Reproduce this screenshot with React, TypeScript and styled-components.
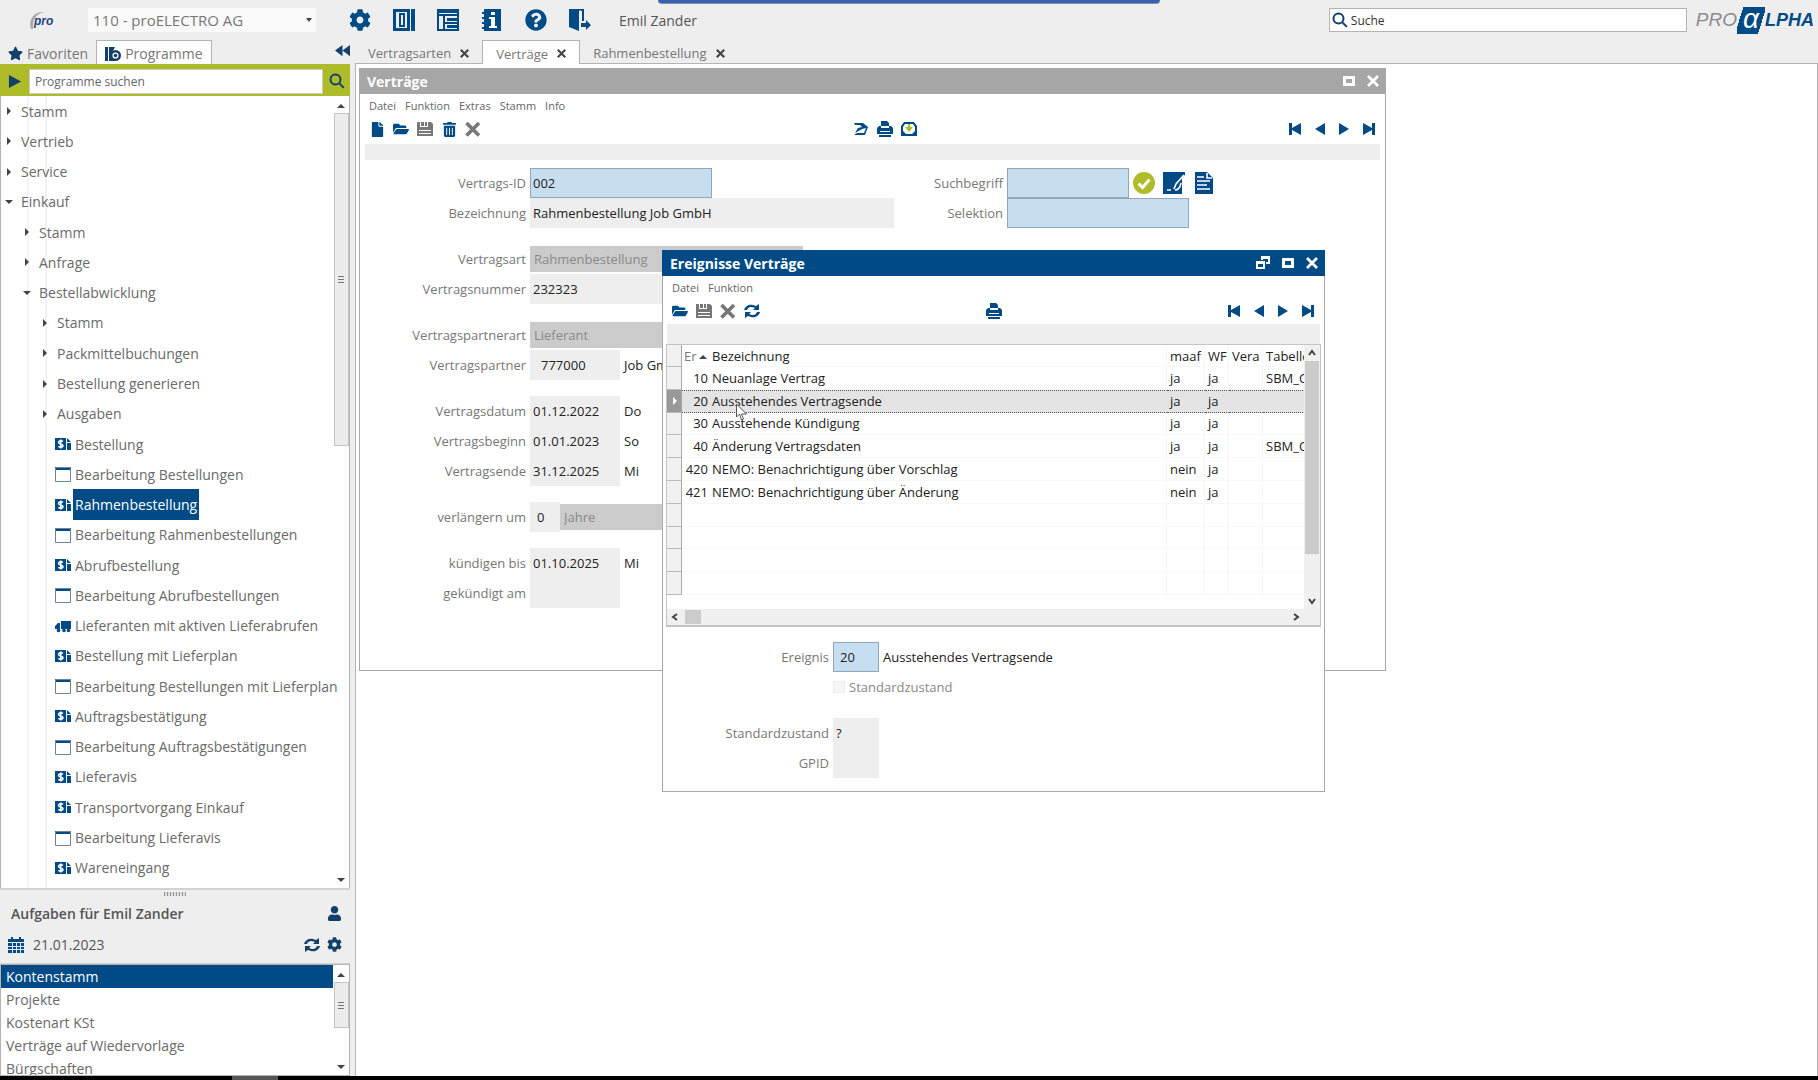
import React from 'react';
import styled, { createGlobalStyle, css } from 'styled-components';
import {
  FaCog, FaStar, FaFile, FaFolderOpen, FaTrashAlt, FaQuestionCircle, FaUser,
} from 'react-icons/fa';

const BLUE = '#004b85';
const DARK = '#12406b';
const GREEN = '#aebc29';
const LINE = '#b4b4b4';
const PANEL = '#eeeeee';

const Global = createGlobalStyle`
  * { box-sizing: border-box; }
  body { margin: 0; background: ${PANEL}; }
  body, button, input, select, table {
    font-family: "Open Sans", "Noto Sans", sans-serif;
    font-size: 14px;
    color: #222;
  }
  button { border: 0; padding: 0; background: none; text-align: left; }
  input, select { min-width: 0; margin: 0; border-radius: 0; outline: 0; }
  ul { list-style: none; margin: 0; padding: 0; }
  svg { display: block; flex: none; }
`;

/* ---------- drawings ---------- */

const Svg = ({ s = 16, box = 16, children }: { s?: number; box?: number; children: React.ReactNode }) => (
  <svg width={s} height={s} viewBox={`0 0 ${box} ${box}`} fill="currentColor" aria-hidden="true">{children}</svg>
);
const ColumnsIcon = () => (
  <Svg s={22} box={22}>
    <path fillRule="evenodd" d="M0 0h17v22H0zM3 3v16h11V3z" />
    <path fillRule="evenodd" d="M6 4h6v14H6zM8 6v10h2V6zM18 0h4v22h-4z" />
  </Svg>
);
const LayoutIcon = () => (
  <Svg s={22} box={22}>
    <path fillRule="evenodd" d="M0 0h22v22H0zM2 4v1h18V4zM2 7v13h4V7zM8 7v6h12V7zM8 15v5h12v-5z" />
    <path d="M10 9h10v3H10zM10 16h10v3H10z" />
  </Svg>
);
const InfoBookIcon = () => (
  <Svg s={22} box={22}>
    <path d="M3 0h17v22H3v-2H1v-2h2v-3H1v-2h2v-3H1V8h2V5H1V3h2z" />
    <path fill="#fff" d="M10 3h4v3h-4zM8 8h6v9h2v2H8v-2h2v-7H8z" />
  </Svg>
);
const ExitIcon = () => (
  <Svg s={22} box={22}>
    <path d="M0 0h12v1l-2 1v20L0 18zM12 0h3v12h-2V2h-1zM12 14h5v-3l5 5-5 5v-3h-5z" />
  </Svg>
);
const ProgramIcon = () => (
  <Svg>
    <path d="M0 1h3v14H0zM4 1h6L8 5l2 10H4z" />
    <circle cx="10.500" cy="9.500" r="4.300" fill="#fff" stroke="currentColor" strokeWidth="2.400" />
    <circle cx="10.500" cy="9.500" r="1.800" />
  </Svg>
);
const CollapseIcon = () => (
  <Svg s={15}><path d="M8 2v12L0 8zM16 2v12L8 8z" /></Svg>
);
const LensIcon = () => (
  <Svg>
    <circle cx="6.500" cy="6.500" r="5" fill="none" stroke="currentColor" strokeWidth="2" />
    <path d="M10 11.400 11.400 10l4.200 4.200-1.400 1.400z" />
  </Svg>
);
const SaveIcon = () => (
  <Svg><path fillRule="evenodd" d="M0 1h3v5h8V1h3l2 2v12H0zM4 1h3v4H4zM8 1h2v4H8zM2 9v1h12V9zM2 12v1h12v-1z" /></Svg>
);
const CrossIcon = () => (
  <Svg><path d="M1.500 2 14 14.500M14 2 1.500 14.500" stroke="currentColor" strokeWidth="3.600" /></Svg>
);
const PrintIcon = () => (
  <Svg>
    <path d="M4 0h6l2 2v3H4zM2 5h2v2h8V5h2l2 2v6H0V7zM2 14h12v2H2z" />
    <path stroke="#fff" d="M3 10.500h10" />
  </Svg>
);
const RefreshIcon = () => (
  <Svg>
    <path d="M0 7c1-4 5-6 9-5l3 1 3-2v6H9l2-2C7 3 4 4 3 7zM16 9c-1 4-5 6-9 5l-3-1-3 2V9h6l-2 2c4 2 7 1 8-2z" />
  </Svg>
);
const RouteIcon = () => (
  <Svg><path fillRule="evenodd" d="M1 2h9l5 4-3 8H1l3-2h7l2-5-4 1-7 4 3-5 4-1-2-2H2z" /></Svg>
);
const InboxIcon = () => (
  <Svg>
    <path fillRule="evenodd" d="M3 1h10l3 4v10H0V5zM4 3 2 6v4l3 3h6l3-3V6l-2-3z" />
    <path fill={GREEN} d="M7 3h2v3h3l-4 5-4-5h3z" />
  </Svg>
);
const DollarIcon = () => (
  <Svg>
    <path d="M0 2h11v12H0zM12 2l4 4h-4zM12 7h4v7h-4z" />
    <path fill="none" stroke="#fff" strokeWidth="1.600" d="M8 5.400C6 4 3.600 5 3.600 6.500c0 2 4.400 1.200 4.400 3.200 0 1.600-2.800 2-4.600.6M5.800 3.500v9" />
  </Svg>
);
const WindowIcon = () => (
  <Svg>
    <path fill={BLUE} d="M0 1h16v3H0z" />
    <path fill="none" stroke="#6d8397" d="M.5 1.500h15v14H.5z" />
  </Svg>
);
const TruckIcon = () => (
  <Svg>
    <path d="M6 3h10v8H6zM0 8l3-3h2v6H0z" />
    <circle cx="3.500" cy="12.500" r="1.800" /><circle cx="9" cy="12.500" r="1.800" /><circle cx="13.500" cy="12.500" r="1.800" />
  </Svg>
);
const CalendarIcon = () => (
  <Svg>
    <path d="M0 2h3V0h2v2h6V0h2v2h3v3H0zM0 6h16v10H0z" />
    <path stroke="#dfe6ee" d="M0 9.500h16M0 12.500h16M4.500 6v10M8.500 6v10M12.500 6v10" />
  </Svg>
);
const CheckIcon = () => (
  <Svg s={22} box={22}>
    <circle cx="11" cy="11" r="11" fill={GREEN} />
    <path d="m5.500 11.500 4 4 7-8" fill="none" stroke="#fff" strokeWidth="3" />
  </Svg>
);
const SignIcon = () => (
  <Svg s={22} box={22}>
    <path d="M0 0h22v3l-3 3v16H0z" />
    <path d="M4 18h4M11 17l2-5 8-9M12 18c3 0 5-2 6-7" fill="none" stroke="#fff" strokeWidth="1.600" />
  </Svg>
);
const SheetIcon = () => (
  <Svg s={22} box={22}>
    <path d="M2 0h12l6 6v16H2z" />
    <path d="M4 5h7M4 9h13M4 13h10M4 17h13M14 1v5h5" fill="none" stroke="#fff" strokeWidth="1.600" />
  </Svg>
);
const MaxIcon = () => (
  <Svg s={12} box={12}><path fillRule="evenodd" d="M0 1h12v10H0zM3 4v4h6V4z" /></Svg>
);
const CloseIcon = ({ s = 12 }: { s?: number }) => (
  <Svg s={s} box={12}><path d="M1 1 11 11M11 1 1 11" stroke="currentColor" strokeWidth="2.800" /></Svg>
);
const RestoreIcon = () => (
  <Svg s={14} box={14}>
    <path fillRule="evenodd" d="M0 5h9v8H0zM2 8v3h5V8zM5 0h9v8h-4V6h2V3H7v1H5z" />
  </Svg>
);
const Tri = ({ dir }: { dir: 'up' | 'down' | 'right' }) => (
  <svg width="8" height="8" viewBox="0 0 8 8" fill="#444" aria-hidden="true">
    <path d={dir === 'up' ? 'M0 6 4 2l4 4z' : dir === 'down' ? 'M0 2h8L4 6z' : 'M2 0l4 4-4 4z'} />
  </svg>
);
const Chevron = ({ d }: { d: string }) => (
  <svg width="8" height="8" viewBox="0 0 8 8" fill="none" stroke="#444" strokeWidth="2" aria-hidden="true"><path d={d} /></svg>
);
const Pointer = () => (
  <svg width="12" height="18" viewBox="0 0 12 18" fill="#fff" stroke="#555" aria-hidden="true">
    <path d="M.5 1v13l3-3 2 6 2-1-2-5h5z" />
  </svg>
);

/* ---------- page ---------- */

const Page = styled.div`
  height: 100vh;
  display: flex;
  flex-direction: column;
  overflow: hidden;
  background: ${PANEL};
  position: relative;
`;
const CallBar = styled.div`
  position: absolute;
  top: 0;
  left: 50%;
  width: 502px;
  height: 4px;
  margin-left: -251px;
  background: #3a5fae;
  border-bottom: 1px solid #7d93a8;
  border-radius: 0 0 4px 4px;
`;
const Header = styled.header`
  height: 40px;
  flex: none;
  display: flex;
  align-items: center;
  padding: 0 4px 0 28px;
`;
const ProMark = styled.div`
  width: 60px;
`;
const Client = styled.select`
  appearance: none;
  width: 228px;
  height: 24px;
  padding: 0 5px;
  border: 0;
  font-size: 15px;
  color: #777;
  background: #f9f9f9 url("data:image/svg+xml,%3Csvg xmlns='http://www.w3.org/2000/svg' width='6' height='4'%3E%3Cpath d='M0 0h6L3 4z' fill='%23444'/%3E%3C/svg%3E") no-repeat right 4px center;
`;
const HeaderTools = styled.div`
  display: flex;
  gap: 22px;
  margin-left: 33px;
  color: ${BLUE};
`;
const IconButton = styled.button`
  display: grid;
  place-items: center;
  color: inherit;
`;
const UserName = styled.span`
  margin-left: 28px;
  color: #555;
`;
const Search = styled.label`
  width: 358px;
  height: 24px;
  margin-left: auto;
  display: flex;
  align-items: center;
  gap: 3px;
  padding-left: 2px;
  background: #fff;
  border: 1px solid ${LINE};
  color: ${DARK};
  input { flex: 1; border: 0; padding: 0; background: none; font-size: 12px; }
  input::placeholder { color: #333; opacity: 1; }
`;
const Brand = styled.div`
  display: flex;
  align-items: center;
  margin-left: 9px;
  font: italic 19px/26px "Liberation Sans", sans-serif;
  color: #8c8c8c;
`;
const BrandAlpha = styled.span`
  width: 28px;
  height: 27px;
  text-align: center;
  font-size: 28px;
  line-height: 24px;
  color: #fff;
  background: linear-gradient(107deg, transparent 6px, ${BLUE} 6px, ${BLUE} 28px, transparent 28px);
`;
const BrandTail = styled.span`
  color: ${BLUE};
  font-weight: bold;
  font-size: 18px;
`;

const Body = styled.div`
  flex: 1;
  min-height: 0;
  display: flex;
`;
const Footer = styled.div`
  height: 4px;
  flex: none;
  background: #000;
  display: flex;
  padding-left: 232px;
  span { width: 46px; background: #555; }
`;

const Side = styled.aside`
  width: 350px;
  flex: none;
  display: flex;
  flex-direction: column;
`;
const TabRow = styled.div<{ $line?: boolean }>`
  height: 24px;
  flex: none;
  display: flex;
  ${p => p.$line && css`box-shadow: inset 0 -1px ${LINE};`}
`;
const Tab = styled.button<{ $active?: boolean }>`
  display: flex;
  align-items: center;
  gap: 9px;
  padding: 2px 13px 0;
  font-size: 13px;
  color: #777;
  ${p => p.$active && css`
    background: #fff;
    border: 1px solid ${LINE};
    border-bottom: 0;
  `}
  svg { color: #444; }
`;
const SideTab = styled(Tab)`
  gap: 4px;
  padding: 2px 8px 0;
  font-size: 14px;
  svg { color: ${DARK}; }
`;
const Collapse = styled(IconButton)`
  margin-left: auto;
  height: 20px;
  color: ${DARK};
`;
const Finder = styled.form`
  height: 32px;
  flex: none;
  display: flex;
  align-items: center;
  gap: 6px;
  padding: 2px 5px 0 8px;
  background: ${GREEN};
  color: ${DARK};
  input {
    flex: 1;
    height: 25px;
    border: 1px solid #c9c9c9;
    padding: 0 5px;
    background: #fff;
    font-size: 12px;
  }
  input::placeholder { color: #666; opacity: 1; }
`;
const Pane = styled.div<{ $grow?: boolean }>`
  ${p => p.$grow ? css`flex: 1;` : css`height: 112px;`}
  min-height: 0;
  display: flex;
  background: #fff;
  border: solid ${LINE};
  border-width: ${p => (p.$grow ? '0 1px' : '1px')};
`;
const Tree = styled.ul`
  flex: 1;
  min-width: 0;
  display: flex;
  flex-direction: column;
  padding-bottom: 5px;
  background:
    linear-gradient(#f3f3f3, #f3f3f3) 26px 0 / 2px 100% no-repeat,
    linear-gradient(#f3f3f3, #f3f3f3) 44px 0 / 2px 100% no-repeat;
`;
const TreeItem = styled.li<{ $level: number }>`
  flex: 1;
  display: flex;
  padding-left: ${p => (p.$level === 3 ? 54 : 4 + p.$level * 18)}px;
`;
const TreeButton = styled.button<{ $selected?: boolean; $leaf?: boolean }>`
  display: flex;
  align-items: center;
  gap: ${p => (p.$leaf ? 2 : 8)}px;
  white-space: nowrap;
  color: ${BLUE};
  span {
    align-self: stretch;
    display: flex;
    align-items: center;
    color: ${p => (p.$selected ? '#fff' : '#6a6a6a')};
    background: ${p => (p.$selected ? BLUE : 'transparent')};
    padding: 0 ${p => (p.$leaf ? 2 : 0)}px;
  }
`;
const Scroll = styled.div`
  width: 16px;
  flex: none;
  display: flex;
  flex-direction: column;
  align-items: center;
  justify-content: space-between;
  padding: 6px 0 4px;
`;
const Thumb = styled.div<{ $share: number }>`
  flex: ${p => p.$share};
  width: 15px;
  margin-top: 3px;
  display: grid;
  place-items: center;
  background: #ececec;
  border: 1px solid #c4c4c4;
  i { width: 6px; height: 7px; background: repeating-linear-gradient(#777 0 1px, transparent 1px 3px); }
`;
const Rest = styled.div<{ $share: number }>`
  flex: ${p => p.$share};
`;
const Splitter = styled.div`
  height: 10px;
  flex: none;
  display: flex;
  justify-content: center;
  align-items: center;
  border-top: 2px solid #d2d2d2;
  span { width: 22px; height: 4px; background: repeating-linear-gradient(90deg, #999 0 1px, #ddd 1px 3px); }
`;
const TaskHead = styled.div`
  height: 66px;
  flex: none;
  display: grid;
  grid-template-columns: 1fr auto;
  grid-auto-rows: 31px;
  align-items: center;
  padding: 0 8px;
  color: #555;
  border-bottom: 1px solid #d2d2d2;
`;
const TaskTitle = styled.h2`
  margin: 0;
  padding-left: 3px;
  font-size: 14px;
  font-weight: 600;
`;
const TaskPart = styled.div`
  display: flex;
  align-items: center;
  justify-content: flex-end;
  gap: 7px;
  color: ${DARK};
`;
const TaskDate = styled.div`
  display: flex;
  align-items: center;
  gap: 9px;
  svg { color: ${BLUE}; }
`;
const TaskList = styled.ul`
  flex: 1;
  overflow: hidden;
`;
const Task = styled.button<{ $selected?: boolean }>`
  display: block;
  width: 100%;
  height: 23px;
  padding-left: 5px;
  line-height: 22px;
  color: ${p => (p.$selected ? '#fff' : '#6a6a6a')};
  background: ${p => (p.$selected ? BLUE : '#fff')};
`;

const Main = styled.main`
  flex: 1;
  min-width: 0;
  margin-left: 5px;
  display: flex;
  flex-direction: column;
`;
const Desktop = styled.div`
  flex: 1;
  position: relative;
  background: #fff;
  border: solid ${LINE};
  border-width: 0 1px;
`;

/* ---------- windows ---------- */

const Frame = styled.section<{ $x: number; $y: number; $w: number; $h: number }>`
  position: absolute;
  left: ${p => p.$x}px;
  top: ${p => p.$y}px;
  width: ${p => p.$w}px;
  height: ${p => p.$h}px;
  background: #fff;
  border: 1px solid #a8a8a8;
`;
const TitleBar = styled.header<{ $active?: boolean }>`
  height: 26px;
  margin: -1px -1px 0;
  display: flex;
  align-items: center;
  gap: 12px;
  padding: 0 7px 0 8px;
  color: #fff;
  background: ${p => (p.$active ? BLUE : '#a6a6a6')};
  h2 { flex: 1; margin: 0; font-size: 14px; font-weight: 700; }
`;
const Menu = styled.nav`
  height: 23px;
  display: flex;
  align-items: center;
  gap: 9px;
  padding: 0 9px;
  button { font-size: 11px; color: #666; }
`;
const Tools = styled.div`
  height: 24px;
  display: flex;
  align-items: center;
  justify-content: space-between;
  padding: 0 9px;
`;
const Group = styled.div`
  display: flex;
  gap: 8px;
  color: ${BLUE};
`;
const ToolButton = styled(IconButton)<{ $off?: boolean }>`
  width: 16px;
  height: 16px;
  color: ${p => (p.$off ? '#777' : BLUE)};
`;
const Strip = styled.div<{ $tall?: boolean }>`
  height: ${p => (p.$tall ? 20 : 16)}px;
  margin: ${p => (p.$tall ? '1px 4px 0' : '3px 5px 0')};
  background: ${PANEL};
`;

const navSteps = [
  ['Erster', 'M1 2h3v5l9-5v12L4 9v5H1z'],
  ['Zurück', 'M13 2v12L3 8z'],
  ['Weiter', 'M3 2v12l10-6z'],
  ['Letzter', 'M15 2h-3v5L3 2v12l9-5v5h3z'],
];
const Navigation = () => (
  <Group>
    {navSteps.map(([name, d]) => (
      <ToolButton key={name} aria-label={name}><Svg><path d={d} /></Svg></ToolButton>
    ))}
  </Group>
);

const FormColumns = styled.form<{ $top: number }>`
  display: flex;
  padding-top: ${p => p.$top}px;
`;
const FormColumn = styled.div<{ $label: number }>`
  --label: ${p => p.$label}px;
`;
const Row = styled.div<{ $gap?: boolean }>`
  height: 30px;
  margin-top: ${p => (p.$gap ? 16 : 0)}px;
  display: flex;
  align-items: center;
  white-space: nowrap;
  font-size: 13px;
`;
const Label = styled.label`
  width: var(--label);
  padding-right: 4px;
  text-align: right;
  color: #777;
`;
const Field = styled.input<{ $w: number; $pad?: number; $edit?: boolean }>`
  width: ${p => p.$w}px;
  height: 30px;
  padding: 0 ${p => p.$pad ?? 2}px;
  font-size: 13px;
  border: 1px solid ${PANEL};
  background: ${PANEL};
  ${p => p.$edit && css`
    background: #c7ddf0;
    border-color: #8fa6bb;
  `}
`;
const Choice = styled.select<{ $w: number }>`
  appearance: none;
  width: ${p => p.$w}px;
  height: 26px;
  padding: 0 4px;
  border: 0;
  opacity: 1;
  font-size: 13px;
  color: #8a8a8a;
  background: #cbcbcb;
`;
const Note = styled.output`
  padding-left: 4px;
`;
const SearchIcons = styled.div`
  display: flex;
  gap: 8px;
  padding-left: 4px;
  color: ${BLUE};
`;
const CheckLabel = styled.label`
  display: flex;
  align-items: center;
  gap: 4px;
  margin-left: var(--label);
  color: #888;
  input {
    appearance: none;
    width: 12px;
    height: 12px;
    background: #f6f6f6;
    border: 1px solid #ededed;
  }
`;

const Browse = styled.div`
  height: 283px;
  margin: 0 3px;
  display: grid;
  grid-template-columns: minmax(0, 1fr) 16px;
  grid-template-rows: minmax(0, 1fr) 16px;
  border: solid #c4c4c4;
  border-width: 1px 1px 2px;
`;
const Clip = styled.div`
  overflow: hidden;
`;
const Grid = styled.table`
  width: 720px;
  height: 250px;
  table-layout: fixed;
  border-collapse: separate;
  border-spacing: 0;
  font-size: 13px;
  line-height: 18px;
  white-space: nowrap;
  th, td {
    height: 22px;
    padding: 0 0 0 3px;
    text-align: left;
    font-weight: 400;
    overflow: hidden;
    border-right: 1px solid #f6f6f6;
    border-bottom: 1px solid #f8f8f8;
  }
`;
const Handle = styled.td<{ $current?: boolean }>`
  && {
    padding: 0 0 0 4px;
    background: ${p => (p.$current ? '#999' : '#f1f1f1')};
    border-right: 1px solid #aaa;
    border-bottom: 1px solid #bbb;
  }
  svg { fill: #fff; }
`;
const NumberCell = styled.td`
  && { padding: 0 1px 0 0; text-align: right; border-right: 0; }
`;
const SortHead = styled.th`
  && { padding: 0 0 0 2px; color: #777; border-right: 0; }
  svg { display: inline-block; margin-left: 2px; }
`;
const Line = styled.tr<{ $current?: boolean }>`
  ${p => p.$current && css`
    td:not(:first-child) {
      background: #e4e4e4;
      border-top: 1px dotted #555;
      border-bottom: 1px dotted #555;
      border-right-color: #e4e4e4;
    }
  `}
`;
const VScroll = styled.div`
  display: flex;
  flex-direction: column;
  align-items: center;
  gap: 4px;
  padding: 4px 0;
  background: #f0f0f0;
  span { width: 14px; background: #cbcbcb; flex: 200; }
  i { flex: 36; }
`;
const HScroll = styled.div`
  grid-column: 1 / -1;
  display: flex;
  align-items: center;
  padding: 0 20px 0 4px;
  background: #f0f0f0;
  span { width: 16px; height: 14px; margin: 0 auto 0 6px; background: #cbcbcb; }
`;
const Mouse = styled.div`
  position: absolute;
  left: 380px;
  top: 339px;
`;

/* ---------- data ---------- */

type Node = [level: number, text: string, kind: 'closed' | 'open' | 'doc' | 'win' | 'truck'];
const tree: Node[] = [
  [0, 'Stamm', 'closed'], [0, 'Vertrieb', 'closed'], [0, 'Service', 'closed'], [0, 'Einkauf', 'open'],
  [1, 'Stamm', 'closed'], [1, 'Anfrage', 'closed'], [1, 'Bestellabwicklung', 'open'],
  [2, 'Stamm', 'closed'], [2, 'Packmittelbuchungen', 'closed'], [2, 'Bestellung generieren', 'closed'], [2, 'Ausgaben', 'closed'],
  [3, 'Bestellung', 'doc'], [3, 'Bearbeitung Bestellungen', 'win'], [3, 'Rahmenbestellung', 'doc'],
  [3, 'Bearbeitung Rahmenbestellungen', 'win'], [3, 'Abrufbestellung', 'doc'], [3, 'Bearbeitung Abrufbestellungen', 'win'],
  [3, 'Lieferanten mit aktiven Lieferabrufen', 'truck'], [3, 'Bestellung mit Lieferplan', 'doc'],
  [3, 'Bearbeitung Bestellungen mit Lieferplan', 'win'], [3, 'Auftragsbestätigung', 'doc'],
  [3, 'Bearbeitung Auftragsbestätigungen', 'win'], [3, 'Lieferavis', 'doc'], [3, 'Transportvorgang Einkauf', 'doc'],
  [3, 'Bearbeitung Lieferavis', 'win'], [3, 'Wareneingang', 'doc'],
];
const kindIcon = {
  closed: <Tri dir="right" />,
  open: <Tri dir="down" />,
  doc: <DollarIcon />,
  win: <WindowIcon />,
  truck: <TruckIcon />,
};
const tasks = ['Kontenstamm', 'Projekte', 'Kostenart KSt', 'Verträge auf Wiedervorlage', 'Bürgschaften'];
const events = [
  ['10', 'Neuanlage Vertrag', 'ja', 'ja', '', 'SBM_C'],
  ['20', 'Ausstehendes Vertragsende', 'ja', 'ja', '', ''],
  ['30', 'Ausstehende Kündigung', 'ja', 'ja', '', ''],
  ['40', 'Änderung Vertragsdaten', 'ja', 'ja', '', 'SBM_C'],
  ['420', 'NEMO: Benachrichtigung über Vorschlag', 'nein', 'ja', '', ''],
  ['421', 'NEMO: Benachrichtigung über Änderung', 'nein', 'ja', '', ''],
  ...Array.from({ length: 4 }, () => ['', '', '', '', '', '']),
];

const DateRow = ({ id, label, value, day, gap }: { id: string; label: string; value: string; day?: string; gap?: boolean }) => (
  <Row $gap={gap}>
    <Label htmlFor={id}>{label}</Label>
    <Field id={id} $w={90} defaultValue={value} readOnly />
    {day && <Note>{day}</Note>}
  </Row>
);

const ContractWindow = () => (
  <Frame $x={3} $y={4} $w={1027} $h={603}>
    <TitleBar>
      <h2>Verträge</h2>
      <IconButton aria-label="Maximieren"><MaxIcon /></IconButton>
      <IconButton aria-label="Schließen"><CloseIcon /></IconButton>
    </TitleBar>
    <Menu>
      {['Datei', 'Funktion', 'Extras', 'Stamm', 'Info'].map(m => <button key={m}>{m}</button>)}
    </Menu>
    <Tools>
      <Group>
        <ToolButton aria-label="Neu"><FaFile size={15} /></ToolButton>
        <ToolButton aria-label="Öffnen"><FaFolderOpen size={16} /></ToolButton>
        <ToolButton aria-label="Speichern" $off><SaveIcon /></ToolButton>
        <ToolButton aria-label="Löschen"><FaTrashAlt size={15} /></ToolButton>
        <ToolButton aria-label="Abbrechen" $off><CrossIcon /></ToolButton>
      </Group>
      <Group>
        <ToolButton aria-label="Ablauf"><RouteIcon /></ToolButton>
        <ToolButton aria-label="Drucken"><PrintIcon /></ToolButton>
        <ToolButton aria-label="Ablage"><InboxIcon /></ToolButton>
      </Group>
      <Navigation />
    </Tools>
    <Strip />
    <FormColumns $top={8}>
      <FormColumn $label={170}>
        <Row>
          <Label htmlFor="cid">Vertrags-ID</Label>
          <Field id="cid" $w={182} $edit defaultValue="002" />
        </Row>
        <Row>
          <Label htmlFor="cname">Bezeichnung</Label>
          <Field id="cname" $w={364} defaultValue="Rahmenbestellung Job GmbH" readOnly />
        </Row>
        <Row $gap>
          <Label htmlFor="ctype">Vertragsart</Label>
          <Choice id="ctype" $w={273} disabled><option>Rahmenbestellung</option></Choice>
        </Row>
        <Row>
          <Label htmlFor="cno">Vertragsnummer</Label>
          <Field id="cno" $w={182} defaultValue="232323" readOnly />
        </Row>
        <Row $gap>
          <Label htmlFor="ptype">Vertragspartnerart</Label>
          <Choice id="ptype" $w={182} disabled><option>Lieferant</option></Choice>
        </Row>
        <Row>
          <Label htmlFor="partner">Vertragspartner</Label>
          <Field id="partner" $w={90} $pad={10} defaultValue="777000" readOnly />
          <Note>Job GmbH</Note>
        </Row>
        <DateRow gap id="d1" label="Vertragsdatum" value="01.12.2022" day="Do" />
        <DateRow id="d2" label="Vertragsbeginn" value="01.01.2023" day="So" />
        <DateRow id="d3" label="Vertragsende" value="31.12.2025" day="Mi" />
        <Row $gap>
          <Label htmlFor="ext">verlängern um</Label>
          <Field id="ext" $w={30} $pad={6} defaultValue="0" readOnly />
          <Choice $w={150} aria-label="Einheit" disabled><option>Jahre</option></Choice>
        </Row>
        <DateRow gap id="d4" label="kündigen bis" value="01.10.2025" day="Mi" />
        <DateRow id="d5" label="gekündigt am" value="" />
      </FormColumn>
      <FormColumn $label={113}>
        <Row>
          <Label htmlFor="term">Suchbegriff</Label>
          <Field id="term" $w={122} $edit />
          <SearchIcons>
            <IconButton type="button" aria-label="Freigabe"><CheckIcon /></IconButton>
            <IconButton type="button" aria-label="Unterschrift"><SignIcon /></IconButton>
            <IconButton type="button" aria-label="Dokument"><SheetIcon /></IconButton>
          </SearchIcons>
        </Row>
        <Row>
          <Label htmlFor="sel">Selektion</Label>
          <Field id="sel" $w={182} $edit />
        </Row>
      </FormColumn>
    </FormColumns>
  </Frame>
);

const EventWindow = () => (
  <Frame $x={306} $y={186} $w={663} $h={542}>
    <TitleBar $active>
      <h2>Ereignisse Verträge</h2>
      <IconButton aria-label="Wiederherstellen"><RestoreIcon /></IconButton>
      <IconButton aria-label="Maximieren"><MaxIcon /></IconButton>
      <IconButton aria-label="Schließen"><CloseIcon /></IconButton>
    </TitleBar>
    <Menu>
      {['Datei', 'Funktion'].map(m => <button key={m}>{m}</button>)}
    </Menu>
    <Tools>
      <Group>
        <ToolButton aria-label="Öffnen"><FaFolderOpen size={16} /></ToolButton>
        <ToolButton aria-label="Speichern" $off><SaveIcon /></ToolButton>
        <ToolButton aria-label="Abbrechen" $off><CrossIcon /></ToolButton>
        <ToolButton aria-label="Aktualisieren"><RefreshIcon /></ToolButton>
      </Group>
      <Group>
        <ToolButton aria-label="Drucken"><PrintIcon /></ToolButton>
      </Group>
      <Navigation />
    </Tools>
    <Strip $tall />
    <Browse>
      <Clip>
        <Grid>
          <colgroup>
            <col width="15" /><col width="27" /><col width="458" /><col width="38" /><col width="24" /><col width="34" /><col />
          </colgroup>
          <thead>
            <tr>
              <Handle as="th" />
              <SortHead>Er<Tri dir="up" /></SortHead>
              <th>Bezeichnung</th><th>maaf</th><th>WF</th><th>Vera</th><th>Tabelle</th>
            </tr>
          </thead>
          <tbody>
            {events.map((e, i) => (
              <Line key={i} $current={i === 1}>
                <Handle $current={i === 1}>{i === 1 && <Tri dir="right" />}</Handle>
                <NumberCell>{e[0]}</NumberCell>
                {e.slice(1).map((c, j) => <td key={j}>{c}</td>)}
              </Line>
            ))}
          </tbody>
        </Grid>
      </Clip>
      <VScroll><Chevron d="M1 6l3-4 3 4" /><span /><i /><Chevron d="M1 2l3 4 3-4" /></VScroll>
      <HScroll><Chevron d="M6 1 2 4l4 3" /><span /><Chevron d="M2 1l4 3-4 3" /></HScroll>
    </Browse>
    <FormColumns $top={15}>
      <FormColumn $label={170}>
        <Row>
          <Label htmlFor="ev">Ereignis</Label>
          <Field id="ev" $w={46} $pad={6} $edit defaultValue="20" />
          <Note>Ausstehendes Vertragsende</Note>
        </Row>
        <Row>
          <CheckLabel><input type="checkbox" disabled />Standardzustand</CheckLabel>
        </Row>
        <Row $gap>
          <Label htmlFor="std">Standardzustand</Label>
          <Field id="std" $w={46} defaultValue="?" readOnly />
        </Row>
        <Row>
          <Label htmlFor="gpid">GPID</Label>
          <Field id="gpid" $w={46} readOnly />
        </Row>
      </FormColumn>
    </FormColumns>
  </Frame>
);

export default function App() {
  return (
    <Page>
      <Global />
      <CallBar />
      <Header>
        <ProMark>
          <svg width="30" height="22" viewBox="0 0 30 22">
            <path d="M3 20C0 10 6 2 17 3 9 4 4 10 5 20z" fill="#a9a9a9" />
            <text x="6" y="16" fontFamily="Liberation Sans, sans-serif" fontSize="12" fontWeight="700" fontStyle="italic" fill="#24437c">pro</text>
          </svg>
        </ProMark>
        <Client aria-label="Mandant"><option>110 - proELECTRO AG</option></Client>
        <HeaderTools>
          <IconButton aria-label="Einstellungen"><FaCog size={22} /></IconButton>
          <IconButton aria-label="Spalten"><ColumnsIcon /></IconButton>
          <IconButton aria-label="Layout"><LayoutIcon /></IconButton>
          <IconButton aria-label="Info"><InfoBookIcon /></IconButton>
          <IconButton aria-label="Hilfe"><FaQuestionCircle size={22} /></IconButton>
          <IconButton aria-label="Abmelden"><ExitIcon /></IconButton>
        </HeaderTools>
        <UserName>Emil Zander</UserName>
        <Search><LensIcon /><input placeholder="Suche" aria-label="Suche" /></Search>
        <Brand>PRO<BrandAlpha>α</BrandAlpha><BrandTail>LPHA</BrandTail></Brand>
      </Header>
      <Body>
        <Side>
          <TabRow>
            <SideTab><FaStar size={15} />Favoriten</SideTab>
            <SideTab $active><ProgramIcon />Programme</SideTab>
            <Collapse aria-label="Einklappen"><CollapseIcon /></Collapse>
          </TabRow>
          <Finder>
            <Svg s={15}><path d="M1 1l13 7-13 7z" /></Svg>
            <input placeholder="Programme suchen" aria-label="Programme suchen" />
            <IconButton type="button" aria-label="Suchen"><LensIcon /></IconButton>
          </Finder>
          <Pane $grow>
            <Tree>
              {tree.map(([level, text, kind], i) => (
                <TreeItem key={i} $level={level}>
                  <TreeButton $leaf={level === 3} $selected={text === 'Rahmenbestellung'}>
                    {kindIcon[kind]}<span>{text}</span>
                  </TreeButton>
                </TreeItem>
              ))}
            </Tree>
            <Scroll><Tri dir="up" /><Thumb $share={333}><i /></Thumb><Rest $share={432} /><Tri dir="down" /></Scroll>
          </Pane>
          <Splitter><span /></Splitter>
          <TaskHead>
            <TaskTitle>Aufgaben für Emil Zander</TaskTitle>
            <TaskPart><IconButton aria-label="Benutzer"><FaUser size={15} /></IconButton></TaskPart>
            <TaskDate><CalendarIcon />21.01.2023</TaskDate>
            <TaskPart>
              <IconButton aria-label="Aktualisieren"><RefreshIcon /></IconButton>
              <IconButton aria-label="Einstellungen"><FaCog size={15} /></IconButton>
            </TaskPart>
          </TaskHead>
          <Pane>
            <TaskList>
              {tasks.map((t, i) => <li key={t}><Task $selected={i === 0}>{t}</Task></li>)}
            </TaskList>
            <Scroll><Tri dir="up" /><Thumb $share={46}><i /></Thumb><Rest $share={36} /><Tri dir="down" /></Scroll>
          </Pane>
        </Side>
        <Main>
          <TabRow $line>
            <Tab>Vertragsarten<CloseIcon s={9} /></Tab>
            <Tab $active>Verträge<CloseIcon s={9} /></Tab>
            <Tab>Rahmenbestellung<CloseIcon s={9} /></Tab>
          </TabRow>
          <Desktop>
            <ContractWindow />
            <EventWindow />
            <Mouse><Pointer /></Mouse>
          </Desktop>
        </Main>
      </Body>
      <Footer><span /></Footer>
    </Page>
  );
}
